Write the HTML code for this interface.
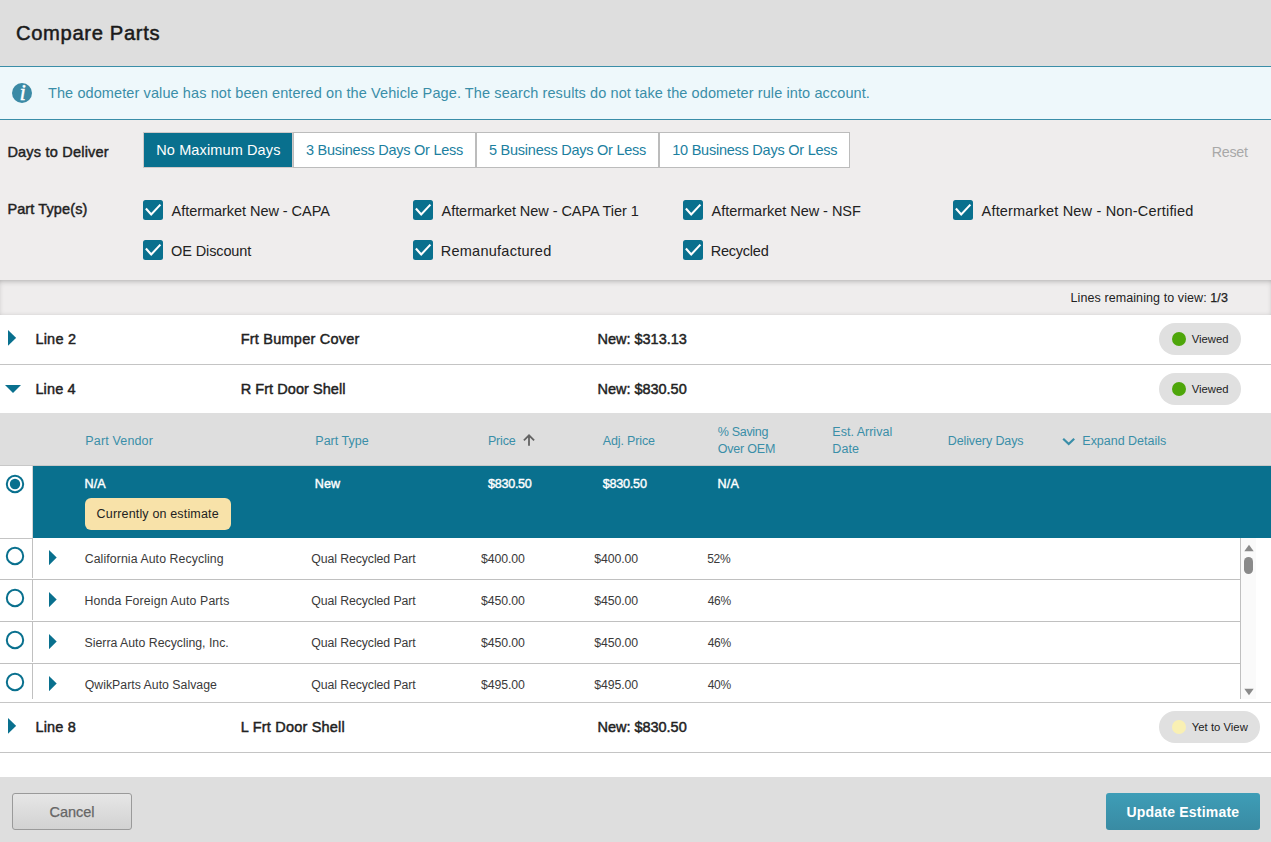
<!DOCTYPE html>
<html lang="en"><head><meta charset="utf-8"><title>Compare Parts</title>
<style>
html,body{margin:0;padding:0}
body{width:1271px;height:842px;overflow:hidden;background:#fff;position:relative;font-family:"Liberation Sans",Arial,sans-serif;}
.a{position:absolute;display:block}
.t{position:absolute;white-space:nowrap;line-height:20px}
</style></head><body>
<div class="a" style="left:0;top:0;width:1271px;height:66px;background:#dedede"></div>
<div class="t" style="left:15.90px;top:23.00px;font-size:20.2px;color:#1a1a1a;letter-spacing:0.66px;-webkit-text-stroke:0.5px #1a1a1a;">Compare Parts</div>
<div class="a" style="left:0;top:66px;width:1271px;height:52px;background:#eef8fb;border-top:1px solid #3a8ea8;border-bottom:1px solid #3a8ea8"></div>
<div class="a" style="left:12.2px;top:83px;width:20px;height:20px;border-radius:50%;background:#3b8aa5"></div>
<div class="t" style="left:12.6px;top:83.4px;width:20px;height:20px;line-height:20px;text-align:center;font-family:'Liberation Serif',serif;font-style:italic;font-size:23px;color:#fff;-webkit-text-stroke:0.4px #fff">i</div>
<div class="t" style="left:47.98px;top:82.78px;font-size:14.5px;color:#3a8ea8;letter-spacing:0.099px;">The odometer value has not been entered on the Vehicle Page. The search results do not take the odometer rule into account.</div>
<div class="a" style="left:0;top:120px;width:1271px;height:160px;background:#efeded"></div>
<div class="a" style="left:0;top:280px;width:1271px;height:35px;overflow:hidden"><div class="a" style="left:-3px;top:0;width:1277px;height:38px;background:#efeded;box-shadow:inset 0 0 6px rgba(0,0,0,.37)"></div></div>
<div class="t" style="left:7.39px;top:142.28px;font-size:14.5px;color:#222;letter-spacing:0.215px;-webkit-text-stroke:0.45px #222;">Days to Deliver</div>
<div class="a" style="left:143px;top:132px;width:148px;height:34px;background:#09708e;border:1px solid #cfc9c9"></div>
<div class="t" style="left:156.25px;top:139.78px;font-size:14.5px;color:#fff;letter-spacing:0.119px;">No Maximum Days</div>
<div class="a" style="left:293px;top:132px;width:181px;height:34px;background:#fff;border:1px solid #bcbcbc"></div>
<div class="t" style="left:305.93px;top:139.78px;font-size:14.5px;color:#1c7f9f;letter-spacing:-0.246px;">3 Business Days Or Less</div>
<div class="a" style="left:476px;top:132px;width:181px;height:34px;background:#fff;border:1px solid #bcbcbc"></div>
<div class="t" style="left:489.02px;top:139.78px;font-size:14.5px;color:#1c7f9f;letter-spacing:-0.25px;">5 Business Days Or Less</div>
<div class="a" style="left:659px;top:132px;width:189px;height:34px;background:#fff;border:1px solid #bcbcbc"></div>
<div class="t" style="left:672.20px;top:139.78px;font-size:14.5px;color:#1c7f9f;letter-spacing:-0.238px;">10 Business Days Or Less</div>
<div class="t" style="left:1211.78px;top:142.35px;font-size:14.3px;color:#a8a8a8;letter-spacing:-0.3px;">Reset</div>
<div class="t" style="left:7.39px;top:199.48px;font-size:14.5px;color:#222;letter-spacing:0.115px;-webkit-text-stroke:0.45px #222;">Part Type(s)</div>
<svg class="a" style="left:143.1px;top:200px" width="20" height="20" viewBox="0 0 20 20"><rect width="20" height="20" rx="2.5" fill="#09708e"/><polyline points="2.9,8.5 8.2,14.5 17.4,4.6" fill="none" stroke="#fff" stroke-width="2.1"/></svg>
<div class="t" style="left:171.57px;top:201.18px;font-size:14.5px;color:#222;letter-spacing:-0.046px;">Aftermarket New - CAPA</div>
<svg class="a" style="left:413.1px;top:200px" width="20" height="20" viewBox="0 0 20 20"><rect width="20" height="20" rx="2.5" fill="#09708e"/><polyline points="2.9,8.5 8.2,14.5 17.4,4.6" fill="none" stroke="#fff" stroke-width="2.1"/></svg>
<div class="t" style="left:441.57px;top:201.18px;font-size:14.5px;color:#222;letter-spacing:-0.057px;">Aftermarket New - CAPA Tier 1</div>
<svg class="a" style="left:683.1px;top:200px" width="20" height="20" viewBox="0 0 20 20"><rect width="20" height="20" rx="2.5" fill="#09708e"/><polyline points="2.9,8.5 8.2,14.5 17.4,4.6" fill="none" stroke="#fff" stroke-width="2.1"/></svg>
<div class="t" style="left:711.57px;top:201.18px;font-size:14.5px;color:#222;letter-spacing:-0.028px;">Aftermarket New - NSF</div>
<svg class="a" style="left:953.1px;top:200px" width="20" height="20" viewBox="0 0 20 20"><rect width="20" height="20" rx="2.5" fill="#09708e"/><polyline points="2.9,8.5 8.2,14.5 17.4,4.6" fill="none" stroke="#fff" stroke-width="2.1"/></svg>
<div class="t" style="left:981.57px;top:201.18px;font-size:14.5px;color:#222;letter-spacing:0.182px;">Aftermarket New - Non-Certified</div>
<svg class="a" style="left:143.1px;top:240px" width="20" height="20" viewBox="0 0 20 20"><rect width="20" height="20" rx="2.5" fill="#09708e"/><polyline points="2.9,8.5 8.2,14.5 17.4,4.6" fill="none" stroke="#fff" stroke-width="2.1"/></svg>
<div class="t" style="left:171.06px;top:241.18px;font-size:14.5px;color:#222;letter-spacing:-0.117px;">OE Discount</div>
<svg class="a" style="left:413.1px;top:240px" width="20" height="20" viewBox="0 0 20 20"><rect width="20" height="20" rx="2.5" fill="#09708e"/><polyline points="2.9,8.5 8.2,14.5 17.4,4.6" fill="none" stroke="#fff" stroke-width="2.1"/></svg>
<div class="t" style="left:440.75px;top:241.18px;font-size:14.5px;color:#222;letter-spacing:0.253px;">Remanufactured</div>
<svg class="a" style="left:683.1px;top:240px" width="20" height="20" viewBox="0 0 20 20"><rect width="20" height="20" rx="2.5" fill="#09708e"/><polyline points="2.9,8.5 8.2,14.5 17.4,4.6" fill="none" stroke="#fff" stroke-width="2.1"/></svg>
<div class="t" style="left:710.75px;top:241.18px;font-size:14.5px;color:#222;letter-spacing:-0.241px;">Recycled</div>
<div class="t" style="left:1070.52px;top:287.77px;font-size:12.5px;color:#222;letter-spacing:0.089px;">Lines remaining to view: <span style="-webkit-text-stroke:0.25px #222">1/3</span></div>
<div class="a" style="left:0;top:364px;width:1271px;height:1px;background:#c4c4c4"></div>
<svg class="a" style="left:7.7px;top:330.1px" width="8.2" height="15.8" viewBox="0 0 8.2 15.8"><polygon points="0,0 8.2,7.9 0,15.8" fill="#09708e"/></svg>
<div class="t" style="left:35.39px;top:328.78px;font-size:14.5px;color:#222;letter-spacing:0.219px;-webkit-text-stroke:0.45px #222;">Line 2</div>
<div class="t" style="left:240.69px;top:328.78px;font-size:14.5px;color:#222;letter-spacing:0.228px;-webkit-text-stroke:0.45px #222;">Frt Bumper Cover</div>
<div class="t" style="left:597.59px;top:328.78px;font-size:14.5px;color:#222;letter-spacing:-0.022px;-webkit-text-stroke:0.45px #222;">New: $313.13</div>
<div class="a" style="left:1159px;top:323px;width:82px;height:32px;border-radius:16px;background:#e0e0e0"></div>
<div class="a" style="left:1171.5px;top:331.7px;width:14.6px;height:14.6px;border-radius:50%;background:#4ea60a"></div>
<div class="t" style="left:1191.73px;top:328.78px;font-size:11.3px;color:#222;letter-spacing:0.008px;">Viewed</div>
<svg class="a" style="left:5px;top:385px" width="16" height="8" viewBox="0 0 16 8"><polygon points="0,0 16,0 8.0,8" fill="#09708e"/></svg>
<div class="t" style="left:35.39px;top:378.78px;font-size:14.5px;color:#222;letter-spacing:0.153px;-webkit-text-stroke:0.45px #222;">Line 4</div>
<div class="t" style="left:240.69px;top:378.78px;font-size:14.5px;color:#222;letter-spacing:0.056px;-webkit-text-stroke:0.45px #222;">R Frt Door Shell</div>
<div class="t" style="left:597.59px;top:378.78px;font-size:14.5px;color:#222;letter-spacing:-0.031px;-webkit-text-stroke:0.45px #222;">New: $830.50</div>
<div class="a" style="left:1159px;top:373px;width:82px;height:32px;border-radius:16px;background:#e0e0e0"></div>
<div class="a" style="left:1171.5px;top:381.7px;width:14.6px;height:14.6px;border-radius:50%;background:#4ea60a"></div>
<div class="t" style="left:1191.73px;top:378.78px;font-size:11.3px;color:#222;letter-spacing:0.008px;">Viewed</div>
<div class="a" style="left:0;top:413px;width:1271px;height:52px;background:#dedede"></div>
<div class="a" style="left:0;top:465px;width:1271px;height:1px;background:#c8c8c8"></div>
<div class="t" style="left:85.31px;top:430.97px;font-size:12.5px;color:#3a8ea8;letter-spacing:0.158px;">Part Vendor</div>
<div class="t" style="left:315.31px;top:430.97px;font-size:12.5px;color:#3a8ea8;letter-spacing:0.004px;">Part Type</div>
<div class="t" style="left:487.92px;top:430.97px;font-size:12.5px;color:#3a8ea8;letter-spacing:-0.186px;">Price</div>
<svg class="a" style="left:522px;top:433px" width="14" height="14" viewBox="0 0 14 14"><path d="M7 12.8V2.2M1.9 7.4L7 2.3L12.1 7.4" fill="none" stroke="#636363" stroke-width="1.8"/></svg>
<div class="t" style="left:602.76px;top:430.97px;font-size:12.5px;color:#3a8ea8;letter-spacing:-0.143px;">Adj. Price</div>
<div class="t" style="left:717.74px;top:422.27px;font-size:12.5px;color:#3a8ea8;letter-spacing:-0.3px;">% Saving</div>
<div class="t" style="left:717.67px;top:439.17px;font-size:12.5px;color:#3a8ea8;letter-spacing:-0.188px;">Over OEM</div>
<div class="t" style="left:832.32px;top:422.27px;font-size:12.5px;color:#3a8ea8;letter-spacing:0.01px;">Est. Arrival</div>
<div class="t" style="left:832.32px;top:439.17px;font-size:12.5px;color:#3a8ea8;letter-spacing:0.052px;">Date</div>
<div class="t" style="left:947.72px;top:430.97px;font-size:12.5px;color:#3a8ea8;letter-spacing:-0.1px;">Delivery Days</div>
<svg class="a" style="left:1061px;top:436px" width="15" height="11" viewBox="0 0 15 11"><path d="M2.2 2.7L7.7 8L13.2 2.7" fill="none" stroke="#3a8ea8" stroke-width="2.2"/></svg>
<div class="t" style="left:1082.32px;top:430.97px;font-size:12.5px;color:#3a8ea8;letter-spacing:-0.015px;">Expand Details</div>
<div class="a" style="left:33px;top:466px;width:1238px;height:72px;background:#09708e"></div>
<div class="a" style="left:32px;top:466px;width:1px;height:72px;background:#d4d4d4"></div>
<svg class="a" style="left:4.529999999999999px;top:474px" width="20" height="20" viewBox="0 0 20 20"><circle cx="10" cy="10" r="8.2" fill="#fff" stroke="#09708e" stroke-width="2"/><circle cx="10" cy="10" r="5.2" fill="#09708e"/></svg>
<div class="t" style="left:84.50px;top:473.83px;font-size:12.6px;color:#fff;letter-spacing:0.057px;-webkit-text-stroke:0.4px #fff;">N/A</div>
<div class="t" style="left:314.80px;top:473.83px;font-size:12.6px;color:#fff;letter-spacing:0.023px;-webkit-text-stroke:0.4px #fff;">New</div>
<div class="t" style="left:488.06px;top:473.83px;font-size:12.6px;color:#fff;letter-spacing:-0.297px;-webkit-text-stroke:0.4px #fff;">$830.50</div>
<div class="t" style="left:602.76px;top:473.83px;font-size:12.6px;color:#fff;letter-spacing:-0.23px;-webkit-text-stroke:0.4px #fff;">$830.50</div>
<div class="t" style="left:717.50px;top:473.83px;font-size:12.6px;color:#fff;letter-spacing:0.157px;-webkit-text-stroke:0.4px #fff;">N/A</div>
<div class="a" style="left:85px;top:498px;width:146px;height:32px;border-radius:6px;background:#f8e2a9"></div>
<div class="t" style="left:96.61px;top:503.57px;font-size:12.5px;color:#222;letter-spacing:0.159px;">Currently on estimate</div>
<div class="a" style="left:0;top:538px;width:1271px;height:161px;overflow:hidden">
<div class="a" style="left:0;top:0;width:33px;height:1px;background:#c4c4c4"></div>
<div class="a" style="left:0;top:41px;width:1240px;height:1px;background:#c0c0c0"></div>
<div class="a" style="left:32px;top:0px;width:1px;height:39.5px;background:#c0c0c0"></div>
<svg class="a" style="left:4.529999999999999px;top:8.0px" width="20" height="20" viewBox="0 0 20 20"><circle cx="10" cy="10" r="8.2" fill="#fff" stroke="#09708e" stroke-width="2"/></svg>
<svg class="a" style="left:49px;top:11.5px" width="7.7" height="15.2" viewBox="0 0 7.7 15.2"><polygon points="0,0 7.7,7.6 0,15.2" fill="#09708e"/></svg>
<div class="t" style="left:84.73px;top:10.94px;font-size:12.3px;color:#3a3a3a;letter-spacing:0.091px;">California Auto Recycling</div>
<div class="t" style="left:311.17px;top:10.94px;font-size:12.3px;color:#3a3a3a;letter-spacing:-0.077px;">Qual Recycled Part</div>
<div class="t" style="left:480.91px;top:10.94px;font-size:12.3px;color:#3a3a3a;letter-spacing:-0.073px;">$400.00</div>
<div class="t" style="left:594.31px;top:10.94px;font-size:12.3px;color:#3a3a3a;letter-spacing:-0.107px;">$400.00</div>
<div class="t" style="left:707.24px;top:11.04px;font-size:12px;color:#3a3a3a;letter-spacing:-0.3px;">52%</div>
<div class="a" style="left:0;top:83px;width:1240px;height:1px;background:#c0c0c0"></div>
<div class="a" style="left:32px;top:42px;width:1px;height:39.5px;background:#c0c0c0"></div>
<svg class="a" style="left:4.529999999999999px;top:50.0px" width="20" height="20" viewBox="0 0 20 20"><circle cx="10" cy="10" r="8.2" fill="#fff" stroke="#09708e" stroke-width="2"/></svg>
<svg class="a" style="left:49px;top:53.5px" width="7.7" height="15.2" viewBox="0 0 7.7 15.2"><polygon points="0,0 7.7,7.6 0,15.2" fill="#09708e"/></svg>
<div class="t" style="left:84.42px;top:52.94px;font-size:12.3px;color:#3a3a3a;letter-spacing:0.149px;">Honda Foreign Auto Parts</div>
<div class="t" style="left:311.17px;top:52.94px;font-size:12.3px;color:#3a3a3a;letter-spacing:-0.077px;">Qual Recycled Part</div>
<div class="t" style="left:480.91px;top:52.94px;font-size:12.3px;color:#3a3a3a;letter-spacing:-0.073px;">$450.00</div>
<div class="t" style="left:594.31px;top:52.94px;font-size:12.3px;color:#3a3a3a;letter-spacing:-0.107px;">$450.00</div>
<div class="t" style="left:707.74px;top:53.04px;font-size:12px;color:#3a3a3a;letter-spacing:-0.3px;">46%</div>
<div class="a" style="left:0;top:125px;width:1240px;height:1px;background:#c0c0c0"></div>
<div class="a" style="left:32px;top:84px;width:1px;height:39.5px;background:#c0c0c0"></div>
<svg class="a" style="left:4.529999999999999px;top:92.0px" width="20" height="20" viewBox="0 0 20 20"><circle cx="10" cy="10" r="8.2" fill="#fff" stroke="#09708e" stroke-width="2"/></svg>
<svg class="a" style="left:49px;top:95.5px" width="7.7" height="15.2" viewBox="0 0 7.7 15.2"><polygon points="0,0 7.7,7.6 0,15.2" fill="#09708e"/></svg>
<div class="t" style="left:84.52px;top:94.94px;font-size:12.3px;color:#3a3a3a;letter-spacing:0.002px;">Sierra Auto Recycling, Inc.</div>
<div class="t" style="left:311.17px;top:94.94px;font-size:12.3px;color:#3a3a3a;letter-spacing:-0.077px;">Qual Recycled Part</div>
<div class="t" style="left:480.91px;top:94.94px;font-size:12.3px;color:#3a3a3a;letter-spacing:-0.073px;">$450.00</div>
<div class="t" style="left:594.31px;top:94.94px;font-size:12.3px;color:#3a3a3a;letter-spacing:-0.107px;">$450.00</div>
<div class="t" style="left:707.74px;top:95.04px;font-size:12px;color:#3a3a3a;letter-spacing:-0.3px;">46%</div>
<div class="a" style="left:32px;top:126px;width:1px;height:39.5px;background:#c0c0c0"></div>
<svg class="a" style="left:4.529999999999999px;top:134.0px" width="20" height="20" viewBox="0 0 20 20"><circle cx="10" cy="10" r="8.2" fill="#fff" stroke="#09708e" stroke-width="2"/></svg>
<svg class="a" style="left:49px;top:137.5px" width="7.7" height="15.2" viewBox="0 0 7.7 15.2"><polygon points="0,0 7.7,7.6 0,15.2" fill="#09708e"/></svg>
<div class="t" style="left:84.77px;top:136.94px;font-size:12.3px;color:#3a3a3a;letter-spacing:0.008px;">QwikParts Auto Salvage</div>
<div class="t" style="left:311.17px;top:136.94px;font-size:12.3px;color:#3a3a3a;letter-spacing:-0.077px;">Qual Recycled Part</div>
<div class="t" style="left:480.91px;top:136.94px;font-size:12.3px;color:#3a3a3a;letter-spacing:-0.073px;">$495.00</div>
<div class="t" style="left:594.31px;top:136.94px;font-size:12.3px;color:#3a3a3a;letter-spacing:-0.107px;">$495.00</div>
<div class="t" style="left:707.74px;top:137.04px;font-size:12px;color:#3a3a3a;letter-spacing:-0.3px;">40%</div>
<div class="a" style="left:1240px;top:0;width:1px;height:161px;background:#c0c0c0"></div>
<div class="a" style="left:1241px;top:0;width:15px;height:161px;background:#fafafa"></div>
<svg class="a" style="left:1243.5px;top:5.5px" width="10" height="8" viewBox="0 0 10 8"><polygon points="5,0.8 9.7,7.3 0.3,7.3" fill="#8a8a8a"/></svg>
<div class="a" style="left:1243.7px;top:18.8px;width:9.6px;height:17.3px;border-radius:5px;background:#8a8a8a"></div>
<svg class="a" style="left:1243.5px;top:149.8px" width="10" height="8" viewBox="0 0 10 8"><polygon points="0.3,0.7 9.7,0.7 5,7.2" fill="#8a8a8a"/></svg>
</div>
<div class="a" style="left:0;top:702px;width:1271px;height:1px;background:#c6c6c6"></div>
<div class="a" style="left:0;top:752px;width:1271px;height:1px;background:#c4c4c4"></div>
<svg class="a" style="left:7.7px;top:718.1px" width="8.2" height="15.8" viewBox="0 0 8.2 15.8"><polygon points="0,0 8.2,7.9 0,15.8" fill="#09708e"/></svg>
<div class="t" style="left:35.39px;top:716.78px;font-size:14.5px;color:#222;letter-spacing:0.211px;-webkit-text-stroke:0.45px #222;">Line 8</div>
<div class="t" style="left:240.69px;top:716.78px;font-size:14.5px;color:#222;letter-spacing:0.203px;-webkit-text-stroke:0.45px #222;">L Frt Door Shell</div>
<div class="t" style="left:597.59px;top:716.78px;font-size:14.5px;color:#222;letter-spacing:-0.031px;-webkit-text-stroke:0.45px #222;">New: $830.50</div>
<div class="a" style="left:1159px;top:711px;width:101px;height:32px;border-radius:16px;background:#e0e0e0"></div>
<div class="a" style="left:1171.5px;top:719.7px;width:14.6px;height:14.6px;border-radius:50%;background:#f9f0b3"></div>
<div class="t" style="left:1191.81px;top:717.08px;font-size:11.3px;color:#222;letter-spacing:0.01px;">Yet to View</div>
<div class="a" style="left:0;top:777px;width:1271px;height:65px;background:#dedede"></div>
<div class="a" style="left:12px;top:793px;width:118px;height:35px;border:1px solid #9a9a9a;border-radius:3px;background:linear-gradient(#e6e6e6,#d2d2d2)"></div>
<div class="t" style="left:49.50px;top:801.68px;font-size:14.5px;color:#666;letter-spacing:-0.032px;-webkit-text-stroke:0.25px #666;">Cancel</div>
<div class="a" style="left:1106px;top:793px;width:154px;height:37px;border-radius:3px;background:linear-gradient(#3e9db7,#398ba3)"></div>
<div class="t" style="left:1126.46px;top:802.35px;font-size:14px;color:#fff;font-weight:700;letter-spacing:0.206px;">Update Estimate</div>
</body></html>
